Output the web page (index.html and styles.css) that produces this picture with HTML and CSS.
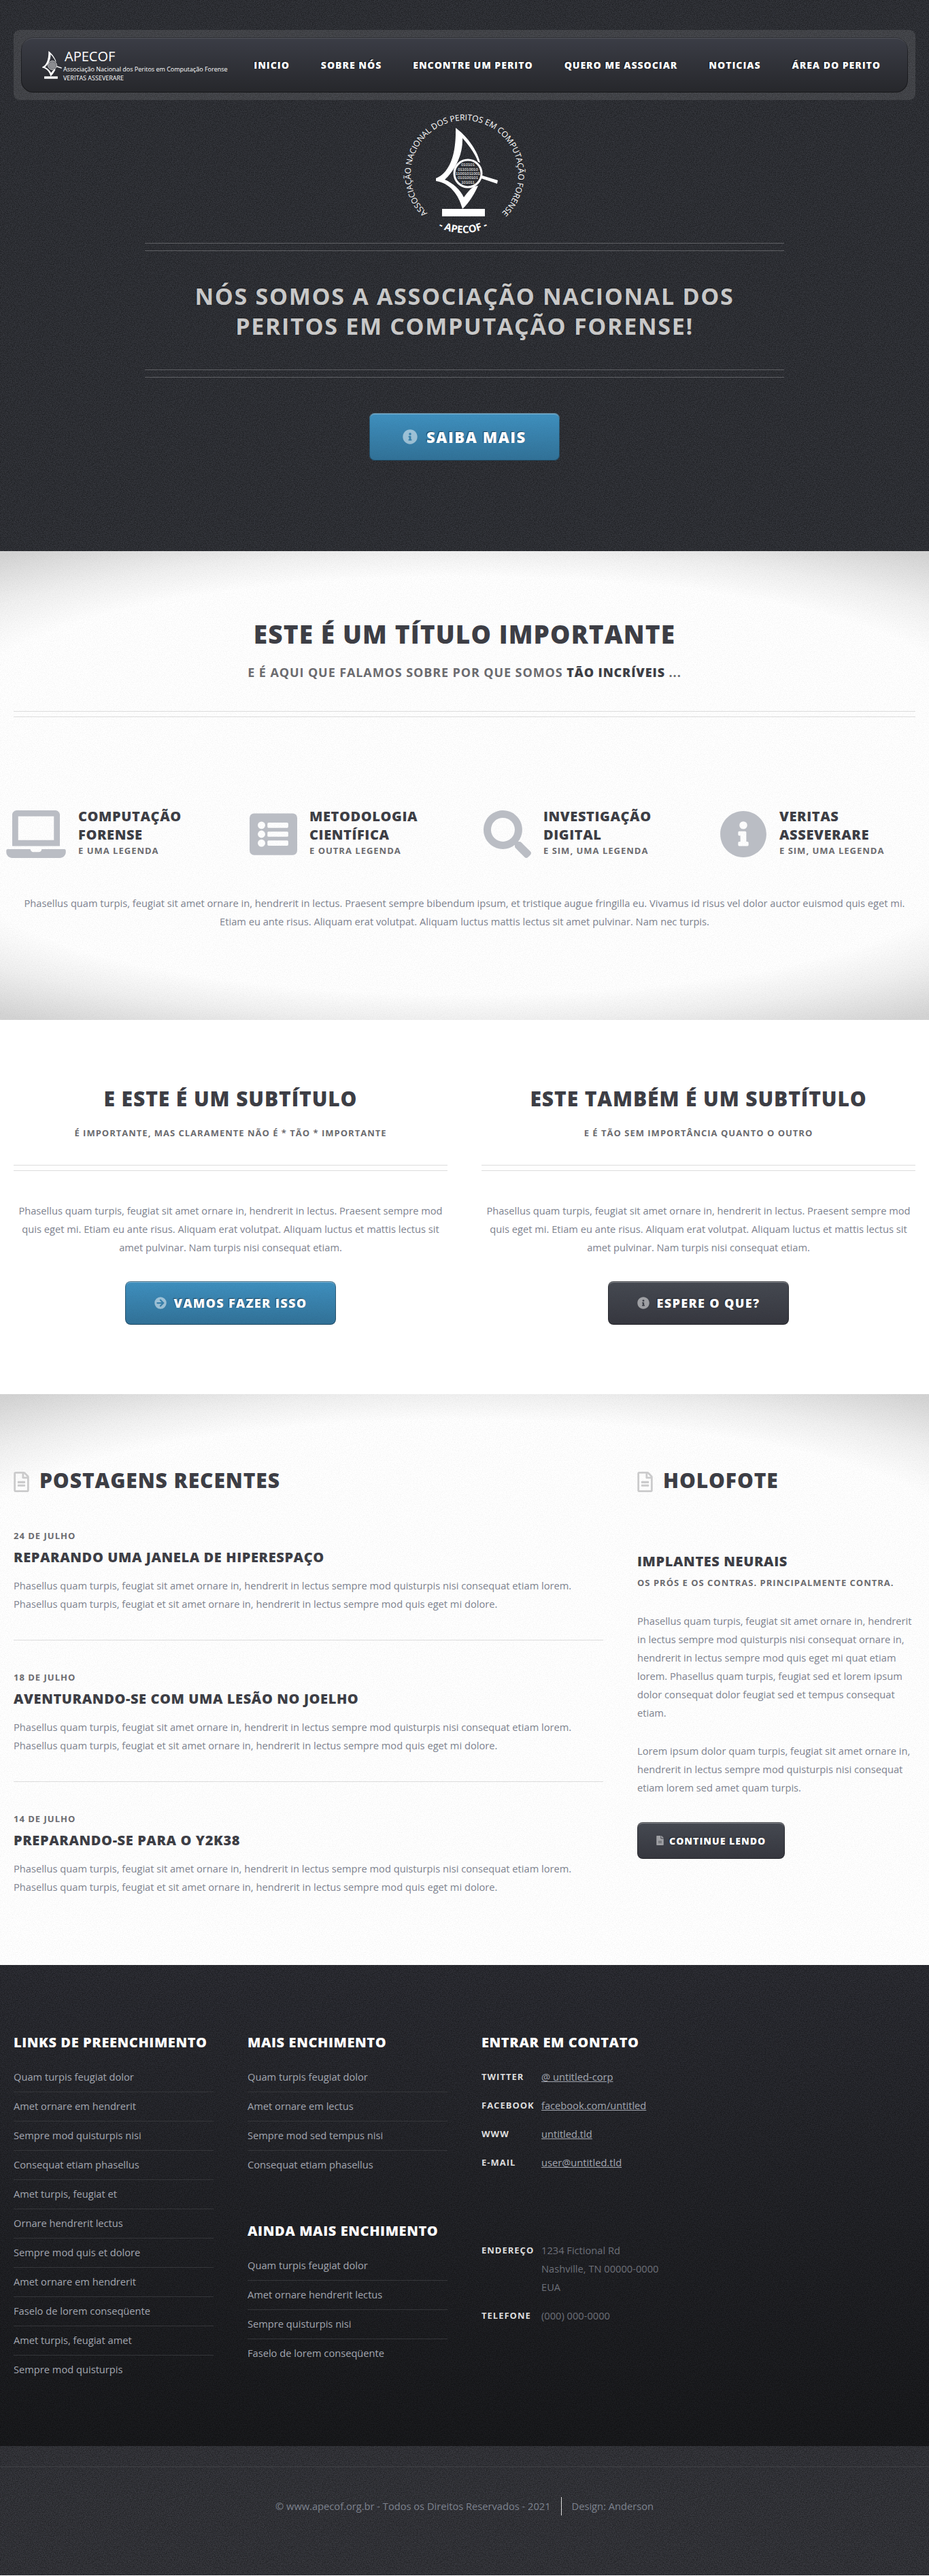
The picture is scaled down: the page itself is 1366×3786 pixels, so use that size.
FILE: index.html
```html
<!DOCTYPE html>
<html lang="pt-BR">
<head>
<meta charset="utf-8">
<title>APECOF</title>
<meta name="viewport" content="width=device-width, initial-scale=1">
<link rel="stylesheet" href="styles.css">
</head>
<body>
<svg class="sprite" aria-hidden="true">
  <symbol id="emblem" viewBox="55 25 100 140">
    <path fill-rule="evenodd" d="M87 28C101 38 118 58 123 79L120 78C117 70 112 60 97 43C98 70 84 92 71 104C83 109 94 119 99 130C104 123 109 117 114 114L120 113C115 124 107 138 97 147C91 125 78 109 58 106V102C76 95 88 72 87 28Z"/>
    <circle cx="105" cy="95" r="20" fill="none" stroke="#fff" stroke-width="3"/>
    <path d="M126 98L149 105L148 110L124 102Z"/>
    <path d="M67 147H130V158H67Z"/>
  </symbol>
  <symbol id="i-info" viewBox="0 0 512 512"><path d="M256 8C119 8 8 119 8 256s111 248 248 248 248-111 248-248S393 8 256 8zm0 110a42 42 0 1 1 0 84 42 42 0 0 1 0-84zm56 254a12 12 0 0 1-12 12h-88a12 12 0 0 1-12-12v-24a12 12 0 0 1 12-12h12v-64h-12a12 12 0 0 1-12-12v-24a12 12 0 0 1 12-12h64a12 12 0 0 1 12 12v100h12a12 12 0 0 1 12 12z"/></symbol>
  <symbol id="i-arrow" viewBox="0 0 512 512"><path fill-rule="evenodd" d="M256 8a248 248 0 1 1 0 496 248 248 0 0 1 0-496zm-29 143 75 73H120a24 24 0 0 0-24 24v16a24 24 0 0 0 24 24h182l-75 73a24 24 0 0 0 0 34l11 11a24 24 0 0 0 34 0l133-133a24 24 0 0 0 0-34L272 106a24 24 0 0 0-34 0l-11 11a24 24 0 0 0 0 34z"/></symbol>
  <symbol id="i-laptop" viewBox="0 0 640 512"><path fill-rule="evenodd" d="M624 416H381c-1 20-15 32-33 32h-56c-18 0-33-17-33-32H16a16 16 0 0 0-16 16v16c0 35 29 64 64 64h512c35 0 64-29 64-64v-16a16 16 0 0 0-16-16zM576 48c0-26-22-48-48-48H112C86 0 64 22 64 48v336h512zm-64 272H128V64h384z"/></symbol>
  <symbol id="i-list" viewBox="0 0 512 512"><path fill-rule="evenodd" d="M464 480H48a48 48 0 0 1-48-48V80a48 48 0 0 1 48-48h416a48 48 0 0 1 48 48v352a48 48 0 0 1-48 48zM128 120a40 40 0 1 0 0 80 40 40 0 0 0 0-80zm0 96a40 40 0 1 0 0 80 40 40 0 0 0 0-80zm0 96a40 40 0 1 0 0 80 40 40 0 0 0 0-80zm288-136v-32a12 12 0 0 0-12-12H204a12 12 0 0 0-12 12v32a12 12 0 0 0 12 12h200a12 12 0 0 0 12-12zm0 96v-32a12 12 0 0 0-12-12H204a12 12 0 0 0-12 12v32a12 12 0 0 0 12 12h200a12 12 0 0 0 12-12zm0 96v-32a12 12 0 0 0-12-12H204a12 12 0 0 0-12 12v32a12 12 0 0 0 12 12h200a12 12 0 0 0 12-12z"/></symbol>
  <symbol id="i-search" viewBox="0 0 512 512"><path fill-rule="evenodd" d="M505 443 405 343a24 24 0 0 0-17-7h-16a208 208 0 1 0-36 36v16c0 6 3 12 7 17l100 100c9 9 25 9 34 0l28-28c9-10 9-25 0-34zM208 336a128 128 0 1 1 0-256 128 128 0 0 1 0 256z"/></symbol>
  <symbol id="i-doc" viewBox="0 0 384 512"><path fill-rule="evenodd" d="M288 248v28a12 12 0 0 1-12 12H108a12 12 0 0 1-12-12v-28a12 12 0 0 1 12-12h168a12 12 0 0 1 12 12zm-12 72H108a12 12 0 0 0-12 12v28a12 12 0 0 0 12 12h168a12 12 0 0 0 12-12v-28a12 12 0 0 0-12-12zm108-188v332a48 48 0 0 1-48 48H48a48 48 0 0 1-48-48V48A48 48 0 0 1 48 0h204c13 0 25 5 34 14l84 84c9 9 14 21 14 34zm-128-80v76h76zm80 412V176H232a24 24 0 0 1-24-24V48H48v416z"/></symbol>
  <symbol id="i-docfill" viewBox="0 0 384 512"><path fill-rule="evenodd" d="M224 136V0H24A24 24 0 0 0 0 24v464a24 24 0 0 0 24 24h336a24 24 0 0 0 24-24V160H248a24 24 0 0 1-24-24zm64 236a12 12 0 0 1-12 12H108a12 12 0 0 1-12-12v-8a12 12 0 0 1 12-12h168a12 12 0 0 1 12 12zm0-72a12 12 0 0 1-12 12H108a12 12 0 0 1-12-12v-8a12 12 0 0 1 12-12h168a12 12 0 0 1 12 12zm96-178v6H256V0h6c6 0 13 3 17 7l98 98c4 4 7 11 7 17z"/></symbol>
</svg>

<header class="header">
  <nav class="nav">
    <div class="nav-inner">
      <a class="brand" href="#">
        <svg class="brand-mark" viewBox="55 25 100 140">
          <use href="#emblem" x="55" y="25" width="100" height="140"/>
          <circle cx="105" cy="95" r="17" fill="#8b8c90"/>
        </svg>
        <span class="brand-text"><b class="brand-name">APECOF</b><span>Associação Nacional dos Peritos em Computação Forense</span><span>VERITAS ASSEVERARE</span></span>
      </a>
      <ul class="menu">
        <li><a href="#">Inicio</a></li>
        <li><a href="#">Sobre nós</a></li>
        <li><a href="#">Encontre um perito</a></li>
        <li><a href="#">Quero me associar</a></li>
        <li><a href="#">Noticias</a></li>
        <li><a href="#">Área do perito</a></li>
      </ul>
    </div>
  </nav>
  <div class="banner">
    <svg class="seal" viewBox="0 0 200 190" role="img" aria-label="APECOF">
      <defs>
        <path id="ring" d="M50 157A79 79 0 1 1 150 157"/>
        <path id="ring-low" d="M50 168Q98 197 146 168"/>
      </defs>
      <text class="ring-text"><textPath href="#ring" startOffset="50%">ASSOCIAÇÃO NACIONAL DOS PERITOS EM COMPUTAÇÃO FORENSE</textPath></text>
      <text class="ring-name"><textPath href="#ring-low" startOffset="50%">- APECOF -</textPath></text>
      <use href="#emblem" x="55" y="25" width="100" height="140"/>
      <g class="bits">
        <text x="105" y="84">010101</text><text x="105" y="91">011010010</text><text x="105" y="97">11001011001</text><text x="105" y="103">010100101</text><text x="105" y="110">101011</text>
      </g>
    </svg>
    <h1>Nós somos a Associação Nacional dos Peritos em Computação Forense!</h1>
    <a class="btn btn-big" href="#"><svg><use href="#i-info"/></svg>Saiba mais</a>
  </div>
</header>

<section class="intro">
  <h2 class="intro-title">Este é um título importante</h2>
  <p class="intro-sub">E é aqui que falamos sobre por que somos <strong>tão incríveis</strong> ...</p>
  <hr class="double">
  <div class="features">
    <div class="feature"><svg class="wide"><use href="#i-laptop"/></svg><div><h3>Computação<br>Forense</h3><p class="caption">E uma legenda</p></div></div>
    <div class="feature"><svg><use href="#i-list"/></svg><div><h3>Metodologia<br>Científica</h3><p class="caption">E outra legenda</p></div></div>
    <div class="feature"><svg><use href="#i-search"/></svg><div><h3>Investigação<br>Digital</h3><p class="caption">E sim, uma legenda</p></div></div>
    <div class="feature"><svg><use href="#i-info"/></svg><div><h3>Veritas<br>Asseverare</h3><p class="caption">E sim, uma legenda</p></div></div>
  </div>
  <p>Phasellus quam turpis, feugiat sit amet ornare in, hendrerit in lectus. Praesent sempre bibendum ipsum, et tristique augue fringilla eu. Vivamus id risus vel dolor auctor euismod quis eget mi. Etiam eu ante risus. Aliquam erat volutpat. Aliquam luctus mattis lectus sit amet pulvinar. Nam nec turpis.</p>
</section>

<section class="pair">
  <article>
    <h2>E este é um subtítulo</h2>
    <p class="caption">É importante, mas claramente não é * tão * importante</p>
    <hr class="double">
    <p>Phasellus quam turpis, feugiat sit amet ornare in, hendrerit in lectus. Praesent sempre mod quis eget mi. Etiam eu ante risus. Aliquam erat volutpat. Aliquam luctus et mattis lectus sit amet pulvinar. Nam turpis nisi consequat etiam.</p>
    <a class="btn btn-mid" href="#"><svg><use href="#i-arrow"/></svg>Vamos fazer isso</a>
  </article>
  <article>
    <h2>Este também é um subtítulo</h2>
    <p class="caption">E é tão sem importância quanto o outro</p>
    <hr class="double">
    <p>Phasellus quam turpis, feugiat sit amet ornare in, hendrerit in lectus. Praesent sempre mod quis eget mi. Etiam eu ante risus. Aliquam erat volutpat. Aliquam luctus et mattis lectus sit amet pulvinar. Nam turpis nisi consequat etiam.</p>
    <a class="btn btn-mid btn-dark" href="#"><svg><use href="#i-info"/></svg>Espere o que?</a>
  </article>
</section>

<section class="news">
  <div>
    <h2><svg><use href="#i-doc"/></svg>Postagens recentes</h2>
    <div class="posts">
      <article><p class="caption">24 de julho</p><h3>Reparando uma janela de hiperespaço</h3><p>Phasellus quam turpis, feugiat sit amet ornare in, hendrerit in lectus sempre mod quisturpis nisi consequat etiam lorem. Phasellus quam turpis, feugiat et sit amet ornare in, hendrerit in lectus sempre mod quis eget mi dolore.</p></article>
      <article><p class="caption">18 de julho</p><h3>Aventurando-se com uma lesão no joelho</h3><p>Phasellus quam turpis, feugiat sit amet ornare in, hendrerit in lectus sempre mod quisturpis nisi consequat etiam lorem. Phasellus quam turpis, feugiat et sit amet ornare in, hendrerit in lectus sempre mod quis eget mi dolore.</p></article>
      <article><p class="caption">14 de julho</p><h3>Preparando-se para o Y2K38</h3><p>Phasellus quam turpis, feugiat sit amet ornare in, hendrerit in lectus sempre mod quisturpis nisi consequat etiam lorem. Phasellus quam turpis, feugiat et sit amet ornare in, hendrerit in lectus sempre mod quis eget mi dolore.</p></article>
    </div>
  </div>
  <aside class="spot">
    <h2><svg><use href="#i-doc"/></svg>Holofote</h2>
    <h3>Implantes neurais</h3>
    <p class="caption">Os prós e os contras. Principalmente contra.</p>
    <p>Phasellus quam turpis, feugiat sit amet ornare in, hendrerit in lectus sempre mod quisturpis nisi consequat ornare in, hendrerit in lectus sempre mod quis eget mi quat etiam lorem. Phasellus quam turpis, feugiat sed et lorem ipsum dolor consequat dolor feugiat sed et tempus consequat etiam.</p>
    <p>Lorem ipsum dolor quam turpis, feugiat sit amet ornare in, hendrerit in lectus sempre mod quisturpis nisi consequat etiam lorem sed amet quam turpis.</p>
    <a class="btn btn-small btn-dark" href="#"><svg><use href="#i-docfill"/></svg>Continue lendo</a>
  </aside>
</section>

<footer>
  <div class="footer-main">
    <div>
      <h3>Links de preenchimento</h3>
      <ul class="links">
        <li><a href="#">Quam turpis feugiat dolor</a></li>
        <li><a href="#">Amet ornare em hendrerit</a></li>
        <li><a href="#">Sempre mod quisturpis nisi</a></li>
        <li><a href="#">Consequat etiam phasellus</a></li>
        <li><a href="#">Amet turpis, feugiat et</a></li>
        <li><a href="#">Ornare hendrerit lectus</a></li>
        <li><a href="#">Sempre mod quis et dolore</a></li>
        <li><a href="#">Amet ornare em hendrerit</a></li>
        <li><a href="#">Faselo de lorem conseqüente</a></li>
        <li><a href="#">Amet turpis, feugiat amet</a></li>
        <li><a href="#">Sempre mod quisturpis</a></li>
      </ul>
    </div>
    <div class="stack">
      <div>
        <h3>Mais enchimento</h3>
        <ul class="links">
          <li><a href="#">Quam turpis feugiat dolor</a></li>
          <li><a href="#">Amet ornare em lectus</a></li>
          <li><a href="#">Sempre mod sed tempus nisi</a></li>
          <li><a href="#">Consequat etiam phasellus</a></li>
        </ul>
      </div>
      <div>
        <h3>Ainda mais enchimento</h3>
        <ul class="links">
          <li><a href="#">Quam turpis feugiat dolor</a></li>
          <li><a href="#">Amet ornare hendrerit lectus</a></li>
          <li><a href="#">Sempre quisturpis nisi</a></li>
          <li><a href="#">Faselo de lorem conseqüente</a></li>
        </ul>
      </div>
    </div>
    <div class="contact">
      <h3>Entrar em contato</h3>
      <dl>
        <dt>Twitter</dt><dd><a href="#">@ untitled-corp</a></dd>
        <dt>Facebook</dt><dd><a href="#">facebook.com/untitled</a></dd>
        <dt>WWW</dt><dd><a href="#">untitled.tld</a></dd>
        <dt>E-mail</dt><dd><a href="#">user@untitled.tld</a></dd>
      </dl>
      <dl>
        <dt>Endereço</dt><dd>1234 Fictional Rd<br>Nashville, TN 00000-0000<br>EUA</dd>
        <dt>Telefone</dt><dd>(000) 000-0000</dd>
      </dl>
    </div>
  </div>
  <div class="copyright">
    <ul>
      <li>© www.apecof.org.br - Todos os Direitos Reservados - 2021</li>
      <li>Design: Anderson</li>
    </ul>
  </div>
</footer>
</body>
</html>
```
FILE: styles.css
```css
:root {
  --noise-dark: url("data:image/svg+xml,%3Csvg xmlns='http://www.w3.org/2000/svg' width='256' height='256'%3E%3Cfilter id='n' x='0' y='0' width='100%25' height='100%25'%3E%3CfeTurbulence type='fractalNoise' baseFrequency='.8' numOctaves='2' stitchTiles='stitch'/%3E%3CfeColorMatrix values='0 0 0 0 0 0 0 0 0 0 0 0 0 0 0 .9 0 0 0 -.28'/%3E%3C/filter%3E%3Crect width='256' height='256' filter='url(%23n)'/%3E%3C/svg%3E");
  --noise-light: url("data:image/svg+xml,%3Csvg xmlns='http://www.w3.org/2000/svg' width='256' height='256'%3E%3Cfilter id='n' x='0' y='0' width='100%25' height='100%25'%3E%3CfeTurbulence type='fractalNoise' baseFrequency='.8' numOctaves='2' stitchTiles='stitch'/%3E%3CfeColorMatrix values='0 0 0 0 0 0 0 0 0 0 0 0 0 0 0 .1 0 0 0 -.04'/%3E%3C/filter%3E%3Crect width='256' height='256' filter='url(%23n)'/%3E%3C/svg%3E");
}
* { box-sizing: border-box; margin: 0; padding: 0; }
body {
  font: 400 11pt/27px "Open Sans", "Noto Sans", sans-serif;
  color: #7d828e;
  background: #fff;
}
ul { list-style: none; }
a { color: inherit; text-decoration: none; }
svg { fill: currentColor; flex: none; }
.sprite { position: absolute; width: 0; height: 0; }

h1, h2, h3 { color: #3d3e45; font-weight: 800; text-transform: uppercase; letter-spacing: .03em; }
h2 { font-size: 30px; line-height: 40px; }
h3 { font-size: 20px; line-height: 27px; }
.caption {
  font-size: 13px;
  line-height: 21px;
  font-weight: 700;
  letter-spacing: 1px;
  text-transform: uppercase;
  color: #6b6b6f;
}
.double { height: 9px; border: solid #dcdcdc; border-width: 1px 0; }

.btn {
  display: inline-flex;
  align-items: center;
  justify-content: center;
  border-radius: 8px;
  color: #fff;
  font-weight: 800;
  letter-spacing: .075em;
  text-transform: uppercase;
  text-shadow: -1px -1px 1px rgba(0, 0, 0, .5);
  background: var(--noise-light), linear-gradient(#3f91c0, #317197);
  box-shadow: inset 0 0 0 1px rgba(0, 0, 0, .35), inset 0 2px 1px rgba(255, 255, 255, .35);
}
.btn svg { fill: rgba(255, 255, 255, .5); }
.btn-dark { background: var(--noise-light), linear-gradient(#464a52, #36373f); }
.btn-big { height: 70px; padding: 0 49px; gap: 13px; font-size: 22px; }
.btn-big svg { width: 22px; height: 22px; }
.btn-mid { height: 64px; padding: 0 43px; gap: 11px; font-size: 18px; }
.btn-mid svg { width: 18px; height: 18px; }
.btn-small { height: 54px; padding: 0 28px; gap: 8px; font-size: 14px; }
.btn-small svg { width: 11px; height: 14px; }

.header { padding: 44px 20px 133px; background: var(--noise-dark), #35373d; }
.nav { padding: 11px; border-radius: 9px; background: rgba(255, 255, 255, .1); }
.nav-inner {
  display: flex;
  align-items: center;
  justify-content: space-between;
  height: 81px;
  padding: 0 40px 0 30px;
  border-radius: 18px;
  background: linear-gradient(#3b3d46, #26272b);
  box-shadow: inset 0 0 0 1px rgba(0, 0, 0, .4), inset 0 2px 0 rgba(255, 255, 255, .12);
}
.brand { display: flex; align-items: center; color: #fff; }
.brand-mark { width: 32px; height: 44px; }
.brand-text { display: flex; flex-direction: column; font: 400 9px/13px "Open Sans", sans-serif; white-space: nowrap; }
.brand-name { padding-left: 2px; font-size: 20px; line-height: 24px; font-weight: 400; }
.menu { display: flex; gap: 46px; }
.menu a { color: #fff; font-size: 14px; font-weight: 800; letter-spacing: 1px; text-transform: uppercase; text-shadow: -1px -1px 1px #111; white-space: nowrap; }

.banner { display: flex; flex-direction: column; align-items: center; max-width: 940px; margin: 0 auto; padding-top: 13px; }
.seal { width: 200px; height: 190px; color: #fff; margin-bottom: 7px; }
.ring-text { font: 400 12px "Open Sans", sans-serif; text-anchor: middle; }
.ring-name { font: 700 15px "Open Sans", sans-serif; text-anchor: middle; }
.bits { font: 400 6px "Liberation Sans", sans-serif; text-anchor: middle; }
.banner h1 {
  width: 100%;
  padding: 56px 60px 54px;
  margin-bottom: 52px;
  font-size: 34px;
  line-height: 44px;
  font-weight: 700;
  letter-spacing: .05em;
  text-align: center;
  color: #c8c8c8;
  text-shadow: -1px -1px 1px #222;
  background:
    linear-gradient(#5f6064, #5f6064) 0 0 / 100% 1px no-repeat,
    linear-gradient(#5f6064, #5f6064) 0 11px / 100% 1px no-repeat,
    linear-gradient(#5f6064, #5f6064) 0 100% / 100% 1px no-repeat,
    linear-gradient(#5f6064, #5f6064) 0 calc(100% - 11px) / 100% 1px no-repeat;
}

.intro {
  padding: 98px 20px 131px;
  text-align: center;
  background:
    radial-gradient(ellipse 64% 100% at 50% 100%, transparent 82%, rgba(0, 0, 0, .06) 100%, rgba(0, 0, 0, .17) 124%) 0 0 / 100% 210px no-repeat,
    radial-gradient(ellipse 64% 100% at 50% 0, transparent 82%, rgba(0, 0, 0, .06) 100%, rgba(0, 0, 0, .17) 124%) 0 100% / 100% 210px no-repeat,
    var(--noise-light), #fff;
}
.intro-title { font-size: 37px; line-height: 48px; margin-bottom: 19px; }
.intro-sub { font-size: 18px; font-weight: 700; letter-spacing: .05em; text-transform: uppercase; color: #6b6b6f; margin-bottom: 43px; }
.intro-sub strong { font-weight: 800; color: #3d3e45; }
.features {
  display: grid;
  grid-template-columns: 358fr 344fr 347fr 308fr;
  margin: 132px -20px 53px -11px;
  text-align: left;
}
.feature { display: flex; gap: 18px; }
.feature svg { width: 70px; height: 70px; margin-top: 5px; color: #babdc4; }
.feature .wide { width: 88px; }

.pair { display: grid; grid-template-columns: 1fr 1fr; gap: 50px; padding: 96px 20px 102px; text-align: center; }
.pair h2 { margin-bottom: 20px; }
.pair .caption { margin-bottom: 36px; }
.pair .double { margin-bottom: 45px; }
.pair .btn { margin-top: 36px; vertical-align: top; }

.news {
  display: grid;
  grid-template-columns: 867fr 409fr;
  gap: 50px;
  padding: 107px 20px 101px;
  background:
    radial-gradient(ellipse 64% 100% at 50% 100%, transparent 82%, rgba(0, 0, 0, .06) 100%, rgba(0, 0, 0, .17) 124%) 0 0 / 100% 210px no-repeat,
    var(--noise-light), #fff;
}
.news h2 { display: flex; align-items: center; gap: 15px; }
.news h2 svg { width: 23px; height: 30px; margin-top: 4px; color: #cbcbcc; }
.posts { margin-top: 51px; }
.posts article + article { margin-top: 39px; padding-top: 44px; border-top: 1px solid #dcdcdc; }
.posts h3 { margin: 7px 0 15px; }
.spot h3 { margin: 85px 0 8px; }
.spot .caption { margin-bottom: 32px; }
.spot p:not(.caption) + p { margin-top: 29px; }
.spot .btn { margin-top: 37px; vertical-align: top; }

.footer-main {
  display: grid;
  grid-template-columns: repeat(4, 1fr);
  gap: 50px;
  padding: 100px 20px 99px;
  color: #6d7079;
  background: var(--noise-dark), linear-gradient(#303138, #1b1c1f);
}
.footer-main h3 { color: #fff; margin-bottom: 24px; white-space: nowrap; }
.links { color: #a2a6b0; }
.links li + li { margin-top: 8px; padding-top: 7px; border-top: 1px solid #35363a; }
.stack { display: flex; flex-direction: column; gap: 70px; }
.contact { grid-column: span 2; }
.contact dl { display: grid; grid-template-columns: 88px 1fr; row-gap: 15px; }
.contact dl + dl { margin-top: 102px; }
.contact dt { color: #ddd; font-size: 13px; font-weight: 700; letter-spacing: 1px; text-transform: uppercase; }
.contact dd a { color: #a2a6b0; text-decoration: underline; }

.copyright { padding: 30px 0 88px; background: var(--noise-dark), #393a40; }
.copyright ul { display: flex; justify-content: center; padding-top: 44px; border-top: 1px solid #404146; }
.copyright li + li { margin-left: 15px; padding-left: 15px; border-left: 1px solid #ddd; }
```
